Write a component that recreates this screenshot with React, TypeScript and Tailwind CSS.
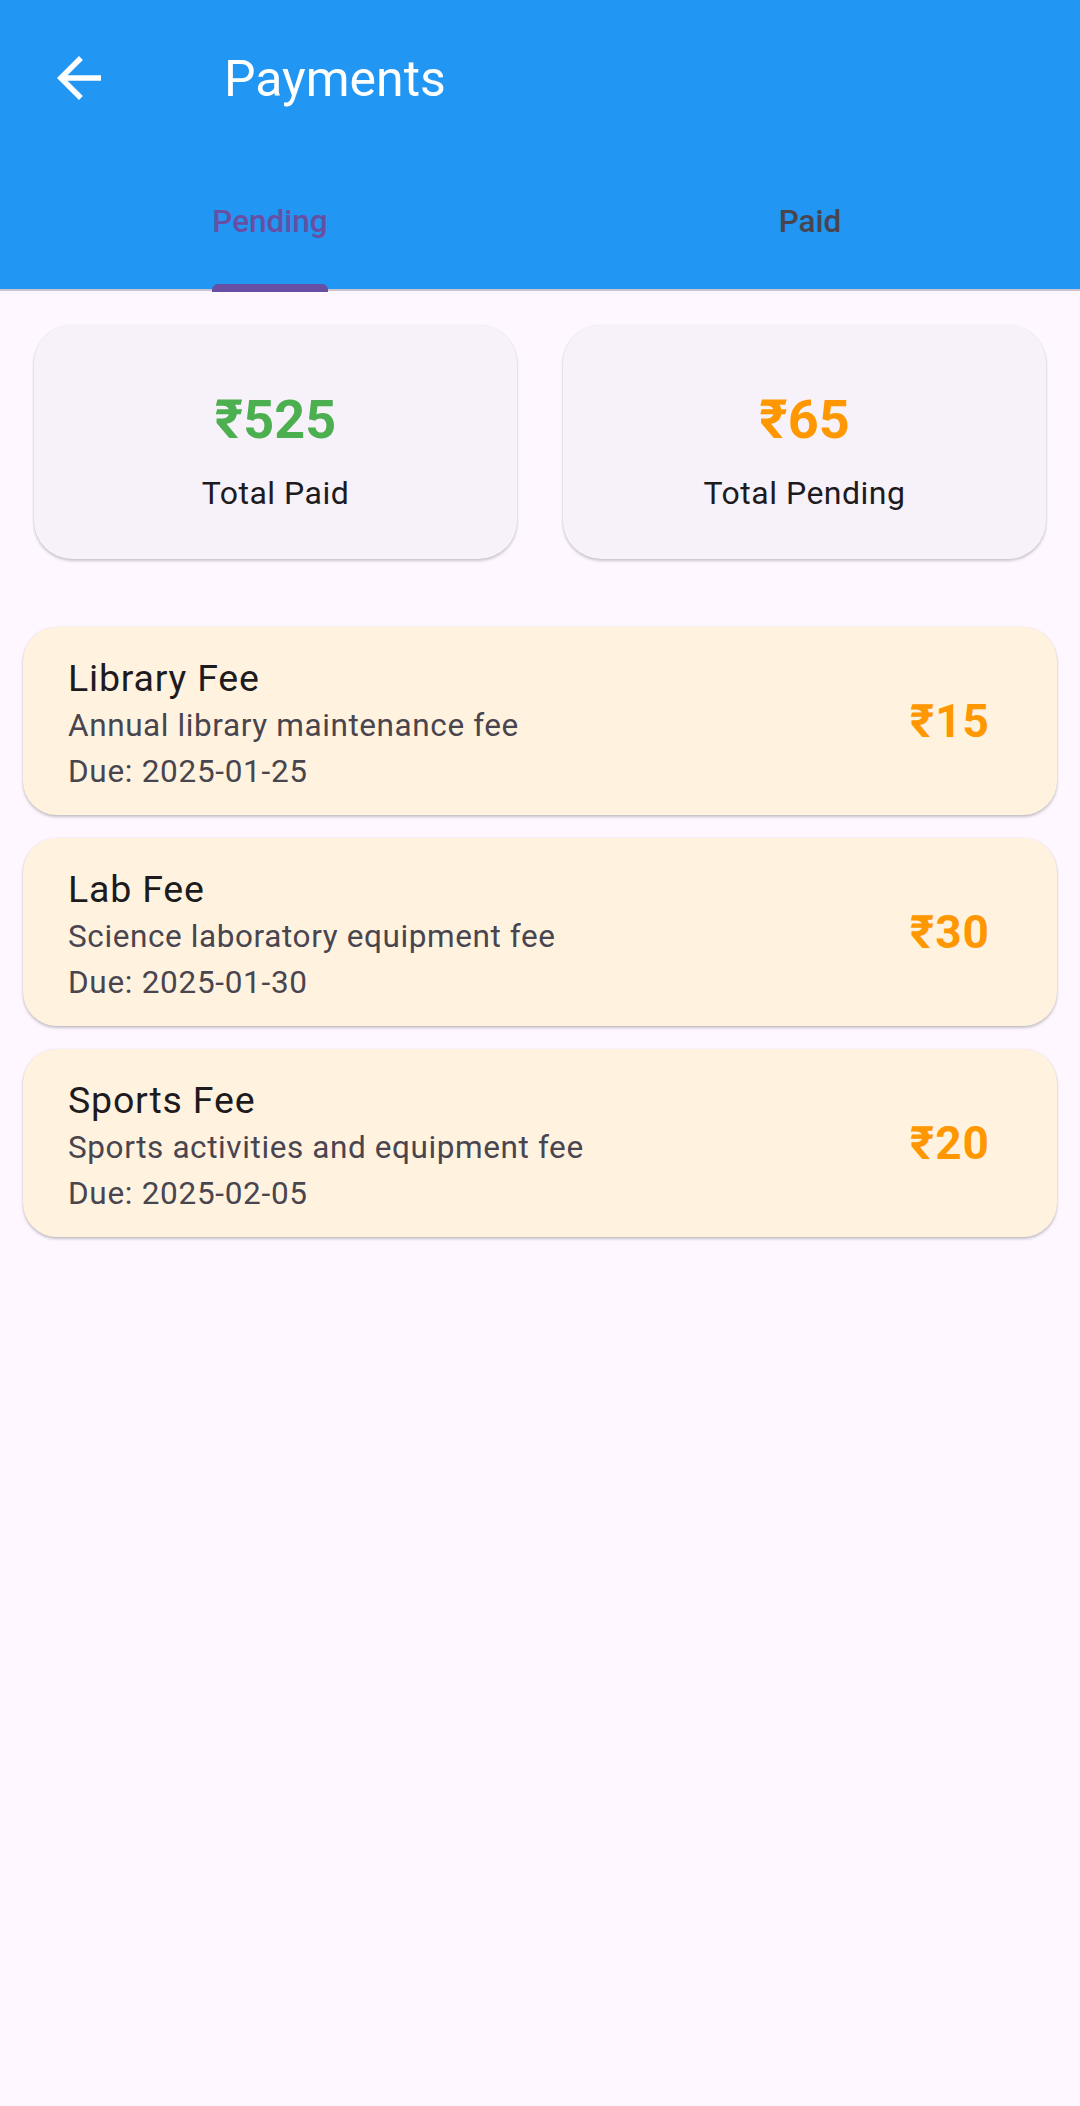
import React from "react";

type Fee = { title: string; desc: string; due: string; amount: string };

const fees: Fee[] = [
  { title: "Library Fee", desc: "Annual library maintenance fee", due: "Due: 2025-01-25", amount: "₹15" },
  { title: "Lab Fee", desc: "Science laboratory equipment fee", due: "Due: 2025-01-30", amount: "₹30" },
  { title: "Sports Fee", desc: "Sports activities and equipment fee", due: "Due: 2025-02-05", amount: "₹20" },
];

function SummaryCard({ amount, label, color }: { amount: string; label: string; color: string }) {
  return (
    <div className="flex-1 h-[234px] rounded-[38px] bg-[#F7F2FA] shadow-[0_2px_3px_rgba(0,0,0,0.2),0_0_2px_rgba(0,0,0,0.08)] flex flex-col items-center pt-[68px]">
      <div className={`text-[54px] leading-[54px] font-bold ${color}`}>{amount}</div>
      <div className="mt-[30px] text-[32px] leading-[32px] text-[#1D1B20] tracking-[0.5px]">{label}</div>
    </div>
  );
}

function FeeCard({ fee }: { fee: Fee }) {
  return (
    <div className="h-[188px] rounded-[34px] bg-[#FFF3E0] shadow-[0_2px_3px_rgba(0,0,0,0.22),0_0_2px_rgba(0,0,0,0.08)] flex items-center justify-between pl-[45px] pr-[67px]">
      <div className="self-start pt-[26px] flex flex-col">
        <div className="text-[37.5px] leading-[50px] text-[#1D1B20] tracking-[0.8px]">{fee.title}</div>
        <div className="text-[31.5px] leading-[46px] text-[#49454F] tracking-[0.6px]">{fee.desc}</div>
        <div className="text-[31.5px] leading-[46px] text-[#49454F] tracking-[0.7px]">{fee.due}</div>
      </div>
      <div className="text-[46px] font-bold text-[#FF9800] tracking-[1px]">{fee.amount}</div>
    </div>
  );
}

export default function App() {
  return (
    <div className="w-[1080px] min-h-[2106px] bg-[#FEF7FF] font-['Roboto','Noto_Sans',sans-serif]">
      <header className="bg-[#2196F3]">
        <div className="h-[158px] flex items-center">
          <svg className="ml-[46px] -mt-[2px]" width="66" height="66" viewBox="0 0 24 24" fill="white">
            <path d="M20 11H7.83l5.59-5.59L12 4l-8 8 8 8 1.41-1.41L7.83 13H20v-2z" />
          </svg>
          <h1 className="ml-[112px] text-[50px] text-white font-normal">Payments</h1>
        </div>
        <div className="h-[131px] flex">
          <div className="flex-1 flex justify-center">
            <span className="relative h-full flex items-center pb-[3px] text-[31.5px] font-medium text-[#6750A4]">
              Pending
              <span className="absolute left-0 right-0 bottom-[-3px] h-[8px] rounded-t-[6px] bg-[#6750A4] z-10"></span>
            </span>
          </div>
          <div className="flex-1 flex items-center justify-center pb-[3px]">
            <span className="text-[31.5px] font-medium text-[#49454F]">Paid</span>
          </div>
        </div>
      </header>
      <div className="h-[2px] bg-[#CAC4D0]"></div>
      <div className="flex gap-[46px] px-[34px] pt-[34px]">
        <SummaryCard amount="₹525" label="Total Paid" color="text-[#4CAF50]" />
        <SummaryCard amount="₹65" label="Total Pending" color="text-[#FF9800]" />
      </div>
      <div className="flex flex-col gap-[23px] px-[23px] pt-[68px]">
        {fees.map((f) => (
          <FeeCard key={f.title} fee={f} />
        ))}
      </div>
    </div>
  );
}
